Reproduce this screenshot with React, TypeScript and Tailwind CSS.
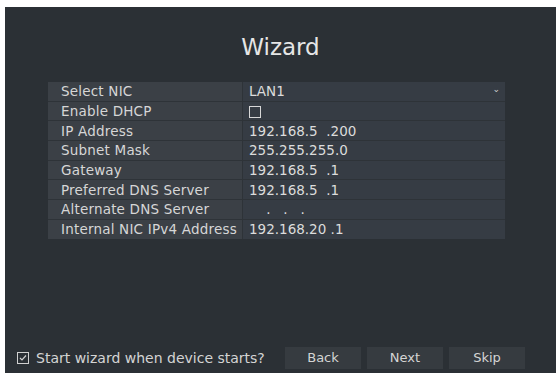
import React from "react";

const rows: { label: string; value: React.ReactNode }[] = [
  { label: "Select NIC", value: "LAN1" },
  { label: "Enable DHCP", value: <span className="inline-block w-[12px] h-[12px] border border-[#d8d8d8] align-middle" /> },
  { label: "IP Address", value: "192.168.5  .200" },
  { label: "Subnet Mask", value: "255.255.255.0" },
  { label: "Gateway", value: "192.168.5  .1" },
  { label: "Preferred DNS Server", value: "192.168.5  .1" },
  { label: "Alternate DNS Server", value: "    .   .   ." },
  { label: "Internal NIC IPv4 Address", value: "192.168.20 .1" },
];

export default function App() {
  return (
    <div className="w-[556px] h-[373px] bg-white pt-[7px] pl-[5px] overflow-hidden" style={{ fontFamily: '"DejaVu Sans", sans-serif' }}>
      <div className="w-[551px] h-[366px] bg-[#2b3035] flex flex-col">
        <div className="h-[75px] flex items-center justify-center pt-[5px] text-[23px] text-[#e6e6e6]">Wizard</div>
        <div className="ml-[43px] w-[457px] flex flex-col gap-[1px] bg-[#2e3338]">
          {rows.map((r, i) => (
            <div key={i} className="flex h-[18.7px]">
              <div className="w-[194px] bg-[#3b4046] flex items-center pl-[13px] text-[13.5px] tracking-[0.2px] text-[#d6d6d6] whitespace-pre overflow-visible">{r.label}</div>
              <div className="flex-1 ml-[1px] bg-[#363c44] flex items-center pl-[6px] pr-[5px] text-[13.5px] text-[#dcdcdc] whitespace-pre">
                <span className="flex-1">{r.value}</span>
                {i === 0 && <span className="text-[9px] text-[#cfcfcf] leading-none -mt-[4px]">⌄</span>}
              </div>
            </div>
          ))}
        </div>
        <div className="flex-1" />
        <div className="h-[22px] flex items-center mb-[4px] pl-[12px]">
          <span className="w-[12px] h-[12px] border border-[#d0d0d0] flex items-center justify-center mr-[7px]">
            <svg width="8" height="8" viewBox="0 0 8 8"><path d="M1 4 L3 6 L7 1.5" stroke="#d0d0d0" strokeWidth="1.2" fill="none" /></svg>
          </span>
          <span className="text-[14px] text-[#d4d4d4] w-[249px] whitespace-nowrap">Start wizard when device starts?</span>
          <div className="flex gap-[6px]">
            {["Back", "Next", "Skip"].map((b) => (
              <div key={b} className="w-[76px] h-[22px] bg-[#363b40] flex items-center justify-center text-[13px] text-[#d4d4d4]">{b}</div>
            ))}
          </div>
        </div>
      </div>
    </div>
  );
}
